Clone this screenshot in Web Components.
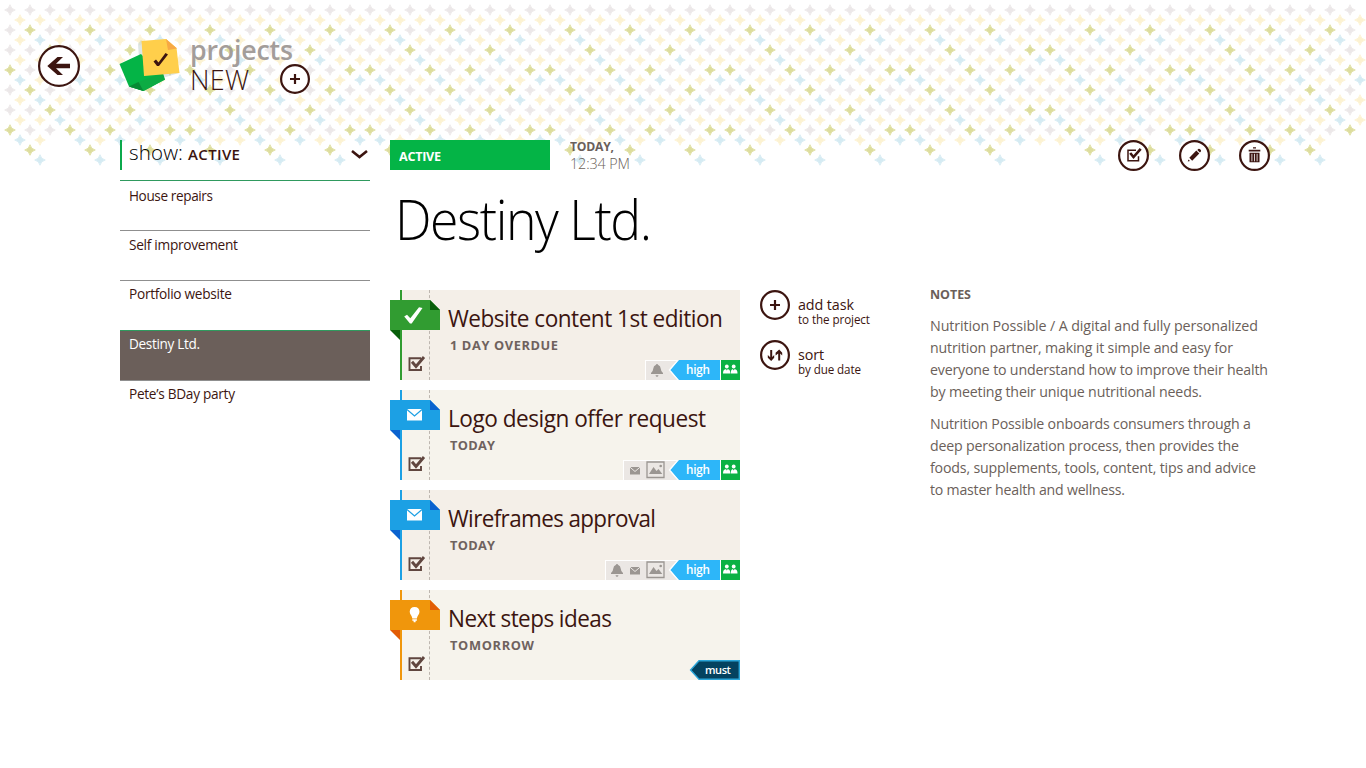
<!DOCTYPE html>
<html lang="en">
<head>
<meta charset="utf-8">
<title>Projects</title>
<style>
html,body{margin:0;height:100%;background:#fff;overflow:hidden}
body{font-family:"Open Sans","Noto Sans",sans-serif;color:#3c1510}
</style>
</head>
<body>
<project-app></project-app>
<script>
const define=(name,html,init)=>{
  const t=document.createElement('template');t.innerHTML=html;
  customElements.define(name,class extends HTMLElement{
    connectedCallback(){
      if(this.shadowRoot)return;
      const r=this.attachShadow({mode:'open'});
      r.appendChild(t.content.cloneNode(true));
      if(init)init.call(this,r);
    }
  });
};

/* A single line of text that fills exactly the width in "w": tightened and condensed when too long, tracked when too short. */
define('fit-text',`<style>:host{display:block;white-space:nowrap}span{display:inline-block;transform-origin:0 50%}</style><span><slot></slot></span>`,function(r){
  const s=r.querySelector('span'),n=this.textContent.length,w=+this.getAttribute('w');
  this.style.width=w+'px';
  const nat=s.getBoundingClientRect().width;
  if(!nat||n<2)return;
  if(nat>w){
    const mid=w+(nat-w)*.45;
    s.style.letterSpacing=((mid-nat)/(n-1)).toFixed(3)+'px';
    s.style.transform='scaleX('+(w/mid).toFixed(4)+')';
  }else s.style.letterSpacing=((w-nat)/(n-1)).toFixed(3)+'px';
});

/* Staggered lattice of four-pointed stars behind the header. */
define('star-field',`<style>:host{display:block;height:170px;overflow:hidden}svg{display:block}</style>
<svg width="1366" height="170"><defs><path id="s" d="M0-5.3Q1-1 5.3 0Q1 1 0 5.3Q-1 1-5.3 0Q-1-1 0-5.3Z"/></defs><g id="g"></g></svg>`,function(r){
  const accent={30:[30,90,150],40:[40,100,160],50:[50,130],60:[60,140],70:[10,70,110,170],80:[20,80,120,0],90:[30,90,150],100:[40,100,160],110:[50,130],120:[60,140],130:[10,70,110,170],140:[20,80,120,0],150:[30,90,150],160:[40,100,160]};
  const edge={90:1310,100:1320,110:1330,120:1340,150:1310,160:1320};
  let out='';
  for(let y=10;y<=160;y+=10){
    const odd=(y/10)%2===1;
    for(let x=odd?10:20;x<1366;x+=20){
      const k=x>=1050?x-1000:x;
      const a=edge[y]&&x>1300?x===edge[y]:(accent[y]||[]).includes(k%180);
      if(y>=150&&!a)continue;
      if(y===140&&(k===60&&x<1000||x===1160||x>1320))continue;
      const c=a?(odd?'#dddd9d':'#d5ebf3'):(odd?'#ece8e9':'#fcf2d2');
      out+=`<use href="#s" x="${x}" y="${y}" fill="${c}" stroke="${c}" stroke-width=".8"/>`;
    }
  }
  r.getElementById('g').innerHTML=out;
});

const icons={
  back:`<path d="M47.300 66 57.5 57H63L56 63.700H70V68.300H56L63 75H57.5Z" transform="translate(-38 -45)"/>`,
  plus:`<path d="M13.900 10h2.200v3.900H20v2.200h-3.900V20h-2.200v-3.900H10v-2.200h3.900z"/>`,
  sort:`<path d="M10.2 10h2v7l2-2v2.8L11.2 21 7.8 17.800v-2.800l2.400 2.200zM18.200 20.500h2v-7l2 2v-2.800L19.200 9.600l-3.600 3.200v2.800l2.600-2.200z"/>`,
  check:`<path d="M18 10.200H10V20.700h10.500v-4.500" fill="none" stroke="currentColor" stroke-width="1.500"/><path d="M12.200 13 15.500 17 22.700 8.800" fill="none" stroke="currentColor" stroke-width="2.600"/>`,
  edit:`<path d="M8.800 21.500 9.400 19.500 11 21zM10.300 17.700 17.300 10.600l3 3-7.100 7.100zM18.300 9.900l1-1q1-.5 2.100.6t.5 2.100l-1 1z"/>`,
  trash:`<path d="M14 7.300h3v1.100h-3zM9.700 9.800h11.600v1.700H9.700zM10.500 12.800h10v9.500H10.500z"/><path d="M12.900 13.800v7.500M15.500 13.800v7.500M18.100 13.800v7.500" stroke="#fff" stroke-width=".8"/>`
};
define('round-button',`<style>:host{display:block;flex:none;color:#3c1510}svg{display:block;fill:currentColor}circle{fill:#fff;stroke:currentColor}</style><span></span>`,function(r){
  const d=+(this.getAttribute('size')||31),w=2.2;
  r.querySelector('span').innerHTML=`<svg width="${d}" height="${d}" viewBox="0 0 ${d} ${d}"><circle cx="${d/2}" cy="${d/2}" r="${(d-w)/2}" stroke-width="${w}"/>${icons[this.getAttribute('icon')]}</svg>`;
});

define('brand-header',`<style>
:host{display:flex;height:140px;box-sizing:border-box;padding:37px 0 0 38px;align-items:flex-start}
round-button.back{margin-top:8px}
.logo{margin-left:38px;display:block;flex:none}
.words{margin-left:8px;width:58px;margin-top:-2px}
.p{font-size:27px;font-weight:600;color:#a39d9a;line-height:30px;height:30px}
.n{font-size:27px;font-weight:300;line-height:30px}
round-button.add{margin:27px 0 0 32px}
</style>
<round-button class="back" size="42" icon="back"></round-button>
<svg class="logo" width="64" height="56" viewBox="118 37 64 56"><path d="M138 44 141 40 179 73 166 77 140 73Z" fill="#b6c8c4" opacity=".45"/><path d="M119.500 64 141 54 165 79.500 143.500 91 129 86.500Z" fill="#04b446"/><path d="M129 86.500 138.500 82 163 73 165 79.500 143.500 91Z" fill="#0cab43"/><path d="M129 86.500 138.500 82 143.500 91Z" fill="#078a35"/><path d="M141.500 41 166 39 176.500 48 179.500 73 144 76Z" fill="#ffcf4b"/><path d="M166 39 177 48.500 168 50Z" fill="#f7a944"/><path d="M153.500 61.500 156 59.500 158.500 62.500 165.500 53 168 54.500 159 66 157 66Z" fill="#3c1510"/></svg>
<div class="words"><fit-text class="p" w="103">projects</fit-text><fit-text class="n" w="59">NEW</fit-text></div>
<round-button class="add" size="30" icon="plus"></round-button>`);

define('filter-bar',`<style>
:host{display:flex;align-items:baseline;height:30px;border-left:2px solid #0ba94c;padding-left:7px;box-sizing:border-box;line-height:24px}
.s{font-size:20.500px;font-weight:340;color:#000}
.a{font-size:15px;font-weight:600;margin-left:5px}
svg{margin-left:auto;margin-right:2px;align-self:flex-start;margin-top:9px}
</style><fit-text class="s" w="54">show:</fit-text><fit-text class="a" w="52">ACTIVE</fit-text>
<svg width="17" height="11"><path d="M1 2 8.500 8 16 2" fill="none" stroke="#3c1510" stroke-width="2.600"/></svg>`);

define('project-item',`<style>
:host{display:block;height:50px;box-sizing:border-box;border-top:1px solid #8f8f8f;padding-left:9px;font-size:14.200px;line-height:20px;padding-top:var(--top,4px)}
:host([accent]){border-top-color:#2f9a5e}
:host([selected]){background:#6b5f5a;color:#fff}
</style><slot></slot>`);

define('status-row',`<style>
:host{display:flex;height:30px}
.badge{width:151px;padding-left:9px;background:#04b446;color:#fff;font-size:13px;font-weight:700;line-height:32px;height:30px}
.time{margin-left:20px;color:#6b5f5a}
.d{font-size:12.500px;font-weight:700;line-height:14px}
.t{font-size:14.500px;font-weight:340;line-height:20px}
nav{display:flex;gap:29.500px;margin-left:auto;margin-top:-.5px}
</style><div class="badge"><fit-text w="42">ACTIVE</fit-text></div>
<div class="time"><fit-text class="d" w="44">TODAY,</fit-text><fit-text class="t" w="60">12:34 PM</fit-text></div>
<nav><round-button icon="check"></round-button><round-button icon="edit"></round-button><round-button icon="trash"></round-button></nav>`);

const chipIcons={
  bell:`<svg class="bell" width="22" height="18" viewBox="1 0 22 18"><path d="M12 3q.9 0 1.200 1 2.300.7 2.500 3.500.2 3 2.300 4.500v1H6v-1q2.100-1.500 2.300-4.500Q8.500 4.700 10.800 4 11.100 3 12 3zM10.500 14.300h3q-.3 1.500-1.500 1.500t-1.500-1.500z"/></svg>`,
  mail:`<svg class="mail" width="14" height="18" viewBox="2 0 14 18"><path d="M4 6h10v7.500H4z"/><path d="M4 6.200 9 10.500 14 6.200" fill="none" stroke="#ebe7e4" stroke-width="1"/></svg>`,
  image:`<svg width="28" height="18" viewBox="-2.500 0 28 18"><path d="M2.500 1h17v15.500h-17z" fill="none" stroke="#9b9692" stroke-width="1.300"/><path d="M4.500 13 9 6l3 4 2-2 3.800 5z"/><circle cx="16.200" cy="5" r="1.300"/></svg>`
};
define('chip-bar',`<style>
:host{display:flex;height:20px;align-items:stretch}
.icons{display:flex;background:#ebe7e4;border:solid #fff;border-width:1px 0 0 1px;box-sizing:border-box;fill:#9b9692;padding-right:14px;margin-right:-14px}
.icons:empty{display:none}
.mail:first-child{margin-left:4px}
.bell:last-child{margin-right:2px}
.tag{position:relative;width:50px;line-height:20px;font-size:12px;font-weight:600;color:#fff}
.tag svg{display:block;position:absolute;left:-2px;top:0}
.tag fit-text{position:relative;margin-left:15.500px}
.team{width:19px;margin-left:1px;background:#0bb144;box-shadow:-1px 0 #fff}
.team svg{display:block}
:host([tag=must]) .team{display:none}
:host([tag=must]) .tag{font-size:11.500px}
:host([tag=must]) .tag fit-text{margin-left:15px}
</style><div class="icons"></div><div class="tag"></div><div class="team"><svg width="19" height="20" fill="#fff"><circle cx="5.800" cy="6.500" r="1.900"/><circle cx="12.700" cy="6.500" r="1.900"/><path d="M2 13.500q0-4 2.300-4.300h.8l.7 1.300.7-1.300h.8q2 .4 2 4.300zM9.800 13.500q0-4 1.500-4.300h.7l.7 1.300.7-1.300h.8q2.300.3 2.300 4.300z"/></svg></div>`,function(r){
  const tag=this.getAttribute('tag'),must=tag==='must';
  r.querySelector('.icons').innerHTML=(this.getAttribute('icons')||'').split(' ').filter(Boolean).map(i=>chipIcons[i]).join('');
  r.querySelector('.tag').innerHTML=`<svg width="52" height="20"><path d="${must?'M2.600 10 11 .700H51.300V19.300H11Z':'M1.500 10 11-1H54V21H11Z'}" fill="${must?'#04425f':'#2db6f9'}" stroke="${must?'#2aa5d8':'#fff'}" stroke-width="1.400"/>${must?'':'<path d="M3.200 10 11.500 0H52V20H11.500Z" fill="#2db6f9"/>'}</svg><fit-text w="${must?26:24}">${tag}</fit-text>`;
});

const tabs={
  done:['#319c31','#085f0a','<path d="M14.200 16.500 17 14.700 20.300 18.300 29 7.200 32.500 8 21.700 23.500 20 23.500Z" fill="#fff"/>'],
  mail:['#1ca0e4','#0a62cf','<path d="M17 9h15v11.500H17z" fill="#fff"/><path d="M17 9.500 24.500 16 32 9.500" fill="none" stroke="#1ca0e4" stroke-width="1.200"/>'],
  idea:['#f0960c','#e25c05','<path d="M24.600 7q4.700.2 4.900 4.800-.1 2-1.500 3.700-1 1.500-1.100 3h-4.600q-.1-1.500-1.100-3-1.400-1.700-1.500-3.700Q19.900 7.200 24.600 7zM22.300 19.200h4.600v1.500h-1.300v1.600h-2v-1.600h-1.300z" fill="#fff"/>']
};
define('task-card',`<style>
:host{display:grid;grid-template-columns:10px 30px 310px;height:90px}
.rail{grid-column:2;background:var(--bg);border-left:2px solid var(--c);border-right:1px dashed #bdb6af;box-sizing:border-box;display:flex;align-items:flex-end;padding:0 0 7px 5px}
.body{background:var(--bg);padding-left:18px;display:flex;flex-direction:column;box-sizing:border-box;height:90px;overflow:hidden}
.t{font-size:23.500px;line-height:30px;margin-top:13px;height:30px}
.d{font-size:12.800px;font-weight:700;color:#6f625e;line-height:20px;margin:2px 0 0 2px}
chip-bar{margin:auto 0 0 auto}
.tab{position:absolute;margin-top:10px;display:block}
</style><svg class="tab" width="50" height="40"></svg>
<div class="rail"><svg width="20" height="18"><path d="M14 3.300H2.500V15h11.500v-4" fill="none" stroke="#60463f" stroke-width="1.900"/><path d="M5 6.700 9 11.500 17 2" fill="none" stroke="#60463f" stroke-width="2.900"/></svg></div>
<div class="body"><div class="t"></div><div class="d"></div></div>`,function(r){
  const g=a=>this.getAttribute(a),[c,f,ic]=tabs[g('kind')];
  this.style.setProperty('--c',c);
  this.style.setProperty('--bg',g('shade'));
  r.querySelector('.tab').innerHTML=`<path d="M0 30H10V40Z" fill="${f}"/><path d="M0 0H40L50 10V30H0Z" fill="${c}"/><path d="M40 0 50 10H40Z" fill="${f}"/>${ic}`;
  r.querySelector('.t').innerHTML=`<fit-text w="${g('tw')}">${g('name')}</fit-text>`;
  r.querySelector('.d').innerHTML=`<fit-text w="${g('dw')}">${g('due')}</fit-text>`;
  const b=document.createElement('chip-bar');
  b.setAttribute('tag',g('tag'));b.setAttribute('icons',g('icons')||'');
  r.querySelector('.body').append(b);
});

define('action-link',`<style>
:host{display:flex;height:50px}
div{margin-left:8px;margin-top:5px}
.a{font-size:14.500px;line-height:19px}
.b{font-size:11.800px;line-height:16px;margin-top:-3px}
</style><round-button size="30"></round-button><div></div>`,function(r){
  const g=a=>this.getAttribute(a);
  r.querySelector('div').innerHTML=`<fit-text class="a" w="${g('aw')}">${g('label')}</fit-text><fit-text class="b" w="${g('bw')}">${g('hint')}</fit-text>`;
  const b=document.createElement('round-button');b.setAttribute('size','30');b.setAttribute('icon',g('icon'));
  r.querySelector('round-button').replaceWith(b);
});

define('notes-panel',`<style>
:host{display:block;color:#6b5f5a}
h2{margin:-5px 0 0;font-size:12.500px;line-height:20px;height:15px;font-weight:700}
p{margin:0 0 10px;font-size:14.500px;line-height:22px}
h2+p{margin-top:15px}
</style><h2><fit-text w="41">NOTES</fit-text></h2>
<p><fit-text w="328">Nutrition Possible / A digital and fully personalized</fit-text><fit-text w="303">nutrition partner, making it simple and easy for</fit-text><fit-text w="338">everyone to understand how to improve their health</fit-text><fit-text w="272">by meeting their unique nutritional needs.</fit-text></p>
<p><fit-text w="321">Nutrition Possible onboards consumers through a</fit-text><fit-text w="309">deep personalization process, then provides the</fit-text><fit-text w="326">foods, supplements, tools, content, tips and advice</fit-text><fit-text w="195">to master health and wellness.</fit-text></p>`);

define('project-app',`<style>
:host{display:block;position:relative;width:1366px;height:768px;overflow:hidden}
star-field{position:absolute;left:0;top:0}
brand-header,main{position:relative}
main{display:flex;padding-left:120px}
aside{width:250px}
filter-bar{margin-bottom:10px}
section{margin-left:20px;width:880px}
h1{margin:0;padding:10px 0 0 5px;height:120px;box-sizing:border-box;font-size:54.500px;font-weight:300;line-height:79px;color:#000}
.cols{display:flex}
.tasks{display:grid;gap:10px;width:350px}
.actions{width:150px;margin-left:20px}
notes-panel{margin-left:20px;width:340px}
</style>
<star-field></star-field>
<brand-header></brand-header>
<main><aside><filter-bar></filter-bar>
<project-item accent style="--top:5px"><fit-text w="84">House repairs</fit-text></project-item>
<project-item><fit-text w="109">Self improvement</fit-text></project-item>
<project-item style="--top:3px"><fit-text w="103">Portfolio website</fit-text></project-item>
<project-item accent selected style="--top:3px"><fit-text w="71">Destiny Ltd.</fit-text></project-item>
<project-item style="--top:3px"><fit-text w="106">Pete’s BDay party</fit-text></project-item>
</aside>
<section><status-row></status-row>
<h1><fit-text w="257">Destiny Ltd.</fit-text></h1>
<div class="cols"><div class="tasks">
<task-card kind="done" shade="#f4efe8" name="Website content 1st edition" tw="275" due="1 DAY OVERDUE" dw="108" tag="high" icons="bell"></task-card>
<task-card kind="mail" shade="#f6f3ec" name="Logo design offer request" tw="258" due="TODAY" dw="45" tag="high" icons="mail image"></task-card>
<task-card kind="mail" shade="#f4efe8" name="Wireframes approval" tw="208" due="TODAY" dw="45" tag="high" icons="bell mail image"></task-card>
<task-card kind="idea" shade="#f6f3ec" name="Next steps ideas" tw="164" due="TOMORROW" dw="84" tag="must"></task-card>
</div>
<div class="actions"><action-link icon="plus" label="add task" aw="56" hint="to the project" bw="72"></action-link><action-link icon="sort" label="sort" aw="26" hint="by due date" bw="63"></action-link></div>
<notes-panel></notes-panel></div>
</section></main>`);
</script>
</body>
</html>
